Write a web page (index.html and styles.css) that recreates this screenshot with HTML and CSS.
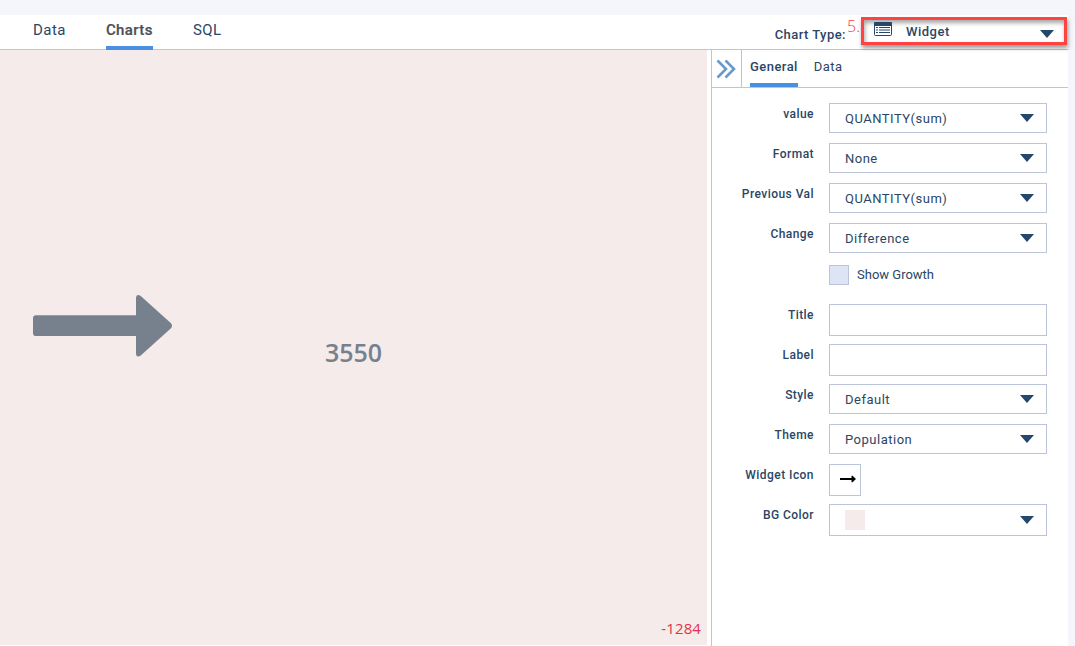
FILE: index.html
```
<!DOCTYPE html>
<html lang="en">
<head>
<meta charset="utf-8">
<title>Chart editor</title>
<link rel="stylesheet" href="styles.css">
</head>
<body>
<div class="page">
  <header class="topbar">
    <nav class="tabs">
      <a class="tab">Data</a>
      <a class="tab active">Charts</a>
      <a class="tab">SQL</a>
    </nav>
    <div class="chart-type">
      <span class="chart-type-label">Chart Type:</span>
      <span class="step">5.</span>
      <div class="type-select">
        <svg class="type-icon" width="18" height="14" viewBox="0 0 18 14"><rect x=".5" y=".5" width="17" height="13" rx="1" fill="#fff" stroke="#24476b"/><path d="M0 1.2Q0 0 1.2 0H16.8Q18 0 18 1.2V4H0z" fill="#24476b"/><path d="M2 5.500h2M5 5.500h11M2 8h2M5 8h11M2 10.500h2M5 10.500h11" stroke="#24476b" stroke-width="1.2"/></svg>
        <span class="type-name">Widget</span>
        <svg class="caret" width="14" height="8" viewBox="0 0 14 8"><path d="M0 0h14L7 8z"/></svg>
      </div>
    </div>
  </header>
  <main class="content">
    <section class="widget">
      <svg class="big-arrow" width="140" height="63" viewBox="0 0 140 63"><path transform="translate(0 .7)" d="M3 20.500H103V3Q103 .3 105 .3Q106.500 .3 108 1.500L138 28.500Q140 31 138 33.500L108 60.500Q106.500 61.700 105 61.700Q103 61.700 103 59V41.300H3Q0 41.300 0 38.500V23.500Q0 20.500 3 20.500z"/></svg>
      <span class="number">3550</span>
      <span class="delta">-1284</span>
    </section>
    <aside class="panel">
      <div class="panel-head">
        <div class="collapse"><svg width="20" height="20" viewBox="0 0 20 20"><path d="M1.500 1.500L10 10L1.500 18.500M9.500 1.500L18 10L9.500 18.500"/></svg></div>
        <nav class="subtabs">
          <a class="subtab active">General</a>
          <a class="subtab">Data</a>
        </nav>
      </div>
      <form class="form">
        <div class="row"><label>value</label><div class="box select"><span>QUANTITY(sum)</span><svg class="caret" width="14" height="8" viewBox="0 0 14 8"><path d="M0 0h14L7 8z"/></svg></div></div>
        <div class="row"><label>Format</label><div class="box select"><span>None</span><svg class="caret" width="14" height="8" viewBox="0 0 14 8"><path d="M0 0h14L7 8z"/></svg></div></div>
        <div class="row"><label>Previous Val</label><div class="box select"><span>QUANTITY(sum)</span><svg class="caret" width="14" height="8" viewBox="0 0 14 8"><path d="M0 0h14L7 8z"/></svg></div></div>
        <div class="row"><label>Change</label><div class="box select"><span>Difference</span><svg class="caret" width="14" height="8" viewBox="0 0 14 8"><path d="M0 0h14L7 8z"/></svg></div></div>
        <div class="row check-row"><div class="checkbox"></div><span class="check-text">Show Growth</span></div>
        <div class="row"><label>Title</label><div class="box tall"></div></div>
        <div class="row"><label>Label</label><div class="box tall"></div></div>
        <div class="row"><label>Style</label><div class="box select"><span>Default</span><svg class="caret" width="14" height="8" viewBox="0 0 14 8"><path d="M0 0h14L7 8z"/></svg></div></div>
        <div class="row"><label>Theme</label><div class="box select"><span>Population</span><svg class="caret" width="14" height="8" viewBox="0 0 14 8"><path d="M0 0h14L7 8z"/></svg></div></div>
        <div class="row"><label>Widget Icon</label><div class="box tall icon-box"><svg width="16" height="8" viewBox="0 0 16 8"><path d="M0 3h11.500V.8L12.500 .8L16 4L12.500 7.200L11.500 7.200V5H0z"/></svg></div></div>
        <div class="row"><label>BG Color</label><div class="box tall select"><i class="swatch"></i><svg class="caret" width="14" height="8" viewBox="0 0 14 8"><path d="M0 0h14L7 8z"/></svg></div></div>
      </form>
    </aside>
  </main>
</div>
</body>
</html>
```
FILE: styles.css
```
* { box-sizing: border-box; }
body {
  margin: 0;
  height: 646px;
  overflow: hidden;
  background: #f5f6fb;
  font-family: Roboto, "Liberation Sans", sans-serif;
  color: #2b4664;
}
svg { display: block; flex: none; }
.page {
  width: 1068px;
  height: 631px;
  margin-top: 15px;
  background: #fff;
  display: flex;
  flex-direction: column;
}
.topbar {
  height: 35px;
  border-bottom: 1px solid #bcc4da;
  display: flex;
  justify-content: space-between;
  position: relative;
}
.tabs { display: flex; gap: 40px; padding-left: 33px; }
.tab {
  height: 34px;
  line-height: 30px;
  font-size: 15px;
  letter-spacing: .45px;
}
.tab.active {
  height: 35px;
  font-weight: 500;
  letter-spacing: .4px;
  color: #4a5056;
  -webkit-text-stroke: .2px;
  border-bottom: 4px solid #4a90e2;
  z-index: 1;
}
.chart-type { display: flex; align-items: flex-start; }
.chart-type-label {
  font-size: 13px;
  font-weight: 500;
  letter-spacing: .45px;
  line-height: 16px;
  margin-top: 12px;
}
.step {
  font-family: "Open Sans", sans-serif;
  font-weight: 350;
  font-size: 16px;
  line-height: 20px;
  color: #ff3b3b;
  width: 14px;
  margin: 1px 0 0 1px;
}
.type-select {
  width: 206px;
  height: 28px;
  margin: 2px 1px 0 0;
  border: 3px solid #ff4343;
  box-shadow: 1px 3px 4px rgba(0,0,0,.4), inset 1px 3px 4px rgba(0,0,0,.35);
  display: flex;
  align-items: flex-start;
  padding: 2px 10px 0 10px;
  position: relative;
  z-index: 2;
}
.type-name {
  font-size: 13px;
  font-weight: 500;
  letter-spacing: .5px;
  line-height: 16px;
  margin: 2px auto 0 14px;
}
.type-select .caret { margin-top: 8px; }
.caret { fill: #24476b; }
.content { display: flex; flex: 1; }
.widget {
  width: 707px;
  height: 595px;
  margin-right: 4px;
  background: #f4ebea;
  display: grid;
  grid-template-columns: 172px 1fr 172px;
}
.big-arrow { fill: #77818e; margin: 244px 0 0 33px; }
.number {
  font-family: "Open Sans", sans-serif;
  font-size: 25px;
  font-weight: 600;
  letter-spacing: -.1px;
  line-height: 34px;
  color: #77818e;
  text-align: center;
  margin-top: 285px;
}
.delta {
  font-family: "Open Sans", sans-serif;
  font-size: 15px;
  letter-spacing: .1px;
  line-height: 20px;
  color: #e0344a;
  text-align: right;
  align-self: end;
  padding: 0 6px 7px 0;
}
.panel { flex: 1; border-left: 1px solid #bcc4da; }
.panel-head { height: 38px; border-bottom: 1px solid #bcc4da; display: flex; }
.collapse {
  width: 30px;
  border-right: 1px solid #bcc4da;
  padding: 9px 0 0 4px;
}
.collapse path { fill: none; stroke: #6998cc; stroke-width: 2.6; }
.subtabs { display: flex; gap: 16px; padding-left: 8px; }
.subtab { height: 37px; line-height: 33px; font-size: 13px; letter-spacing: .45px; }
.subtab.active { font-weight: 500; border-bottom: 4px solid #4a90e2; }
.form { padding: 15px 21px 0 0; display: flex; flex-direction: column; }
.row { height: 40px; display: flex; justify-content: flex-end; }
.row label {
  font-size: 12px;
  font-weight: 500;
  letter-spacing: .45px;
  line-height: 22px;
  margin-right: 15px;
}
.box {
  width: 218px;
  height: 30px;
  border: 1px solid #bcc4da;
  display: flex;
  align-items: center;
}
.tall { height: 32px; }
.select { justify-content: space-between; padding: 0 12px 0 15px; font-size: 13px; letter-spacing: .5px; }
.check-row { height: 41px; justify-content: flex-start; padding: 2px 0 0 117px; }
.checkbox { width: 20px; height: 20px; background: #dce4f5; border: 1px solid #bcc4da; }
.check-text { font-size: 13px; line-height: 19px; letter-spacing: 0; margin-left: 8px; }
.icon-box { width: 32px; margin-right: 186px; padding: 0 0 2px 10px; }
.swatch { width: 20px; height: 20px; background: #f4ebea; }
```
